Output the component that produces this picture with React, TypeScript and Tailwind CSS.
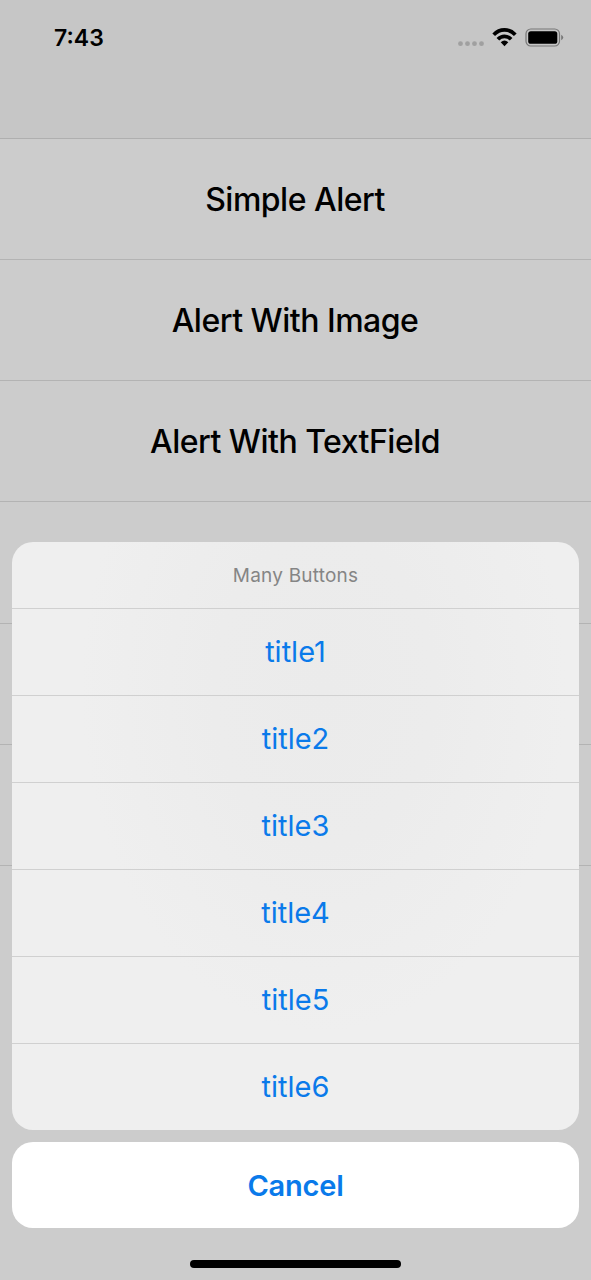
const rows = ["Simple Alert", "Alert With Image", "Alert With TextField", "", "", ""];
const titles = ["title1", "title2", "title3", "title4", "title5", "title6"];

function StatusBar() {
  return (
    <header className="flex h-[139px] items-start justify-between border-b border-[#afafaf] bg-[#c6c6c6] pl-[54px] pr-[27px] pt-[22px]">
      <span className="text-[23px] font-semibold leading-[32px]">7:43</span>
      <svg width="107" height="24" viewBox="457 26 107 24" className="mt-1">
        <g fill="#a0a0a0">
          <circle cx="460.500" cy="43.700" r="2.400" />
          <circle cx="467.500" cy="43.700" r="2.400" />
          <circle cx="474.500" cy="43.700" r="2.400" />
          <circle cx="481.500" cy="43.700" r="2.400" />
        </g>
        <g fill="none" stroke="#000" strokeWidth="3.700">
          <path d="M493.700 34.700C499.800 28.200 509.200 28.200 515.300 34.700" />
          <path d="M497.900 39.300C501.600 35.300 507.400 35.300 511.100 39.300" />
        </g>
        <path d="M500.700 42.300Q504.500 38.900 508.300 42.300L504.500 46.200Z" />
        <rect x="526" y="29" width="33.500" height="17" rx="4.800" fill="none" stroke="#777" strokeWidth="1.200" />
        <rect x="528.200" y="31.200" width="29.100" height="12.600" rx="2.600" />
        <path d="M561.200 34.800Q563.200 35.800 563.200 37.500T561.200 40.200Z" fill="#777" />
      </svg>
    </header>
  );
}

export default function App() {
  return (
    <div className="relative h-[1280px] w-[591px] overflow-hidden bg-[#cccccc] font-['Inter',sans-serif] text-black">
      <StatusBar />
      <main>
        {rows.map((row, index) => (
          <div key={index} className="flex h-[121.150px] items-center justify-center border-b border-[#b3b3b3] pr-px pt-[2px] text-[32px] font-medium tracking-[-0.500px]">{row}</div>
        ))}
      </main>
      <section className="absolute inset-x-[12px] bottom-[52px] flex flex-col gap-[12px]">
        <div className="overflow-hidden rounded-[21px] bg-[#efefef] bg-[radial-gradient(ellipse_at_55%_25%,#ebebeb_0%,#ececec_25%,#efefef_55%)] text-center">
          <div className="flex h-[66px] items-center justify-center pt-[2px] text-[19px] tracking-[0.200px] text-[#858585]">Many Buttons</div>
          {titles.map((title) => (
            <button key={title} className="flex h-[87px] w-full items-center justify-center border-t border-[#d0d0d0] text-[29px] text-[#0a7aea]">{title}</button>
          ))}
        </div>
        <button className="flex h-[86px] items-center justify-center rounded-[21px] bg-white pt-[2px] text-[29px] font-semibold tracking-[-0.200px] text-[#0a7aea]">Cancel</button>
      </section>
      <div className="absolute bottom-[12px] left-[190px] h-[8px] w-[211px] rounded-full bg-black" />
    </div>
  );
}
